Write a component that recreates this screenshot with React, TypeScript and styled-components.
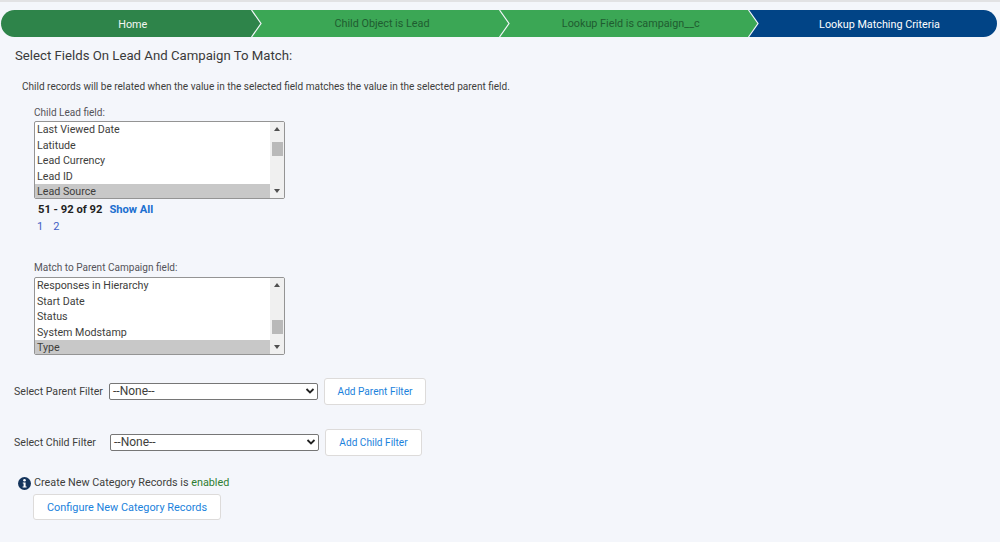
import React from "react";
import styled, { createGlobalStyle } from "styled-components";

const GlobalStyle = createGlobalStyle`
    html, body {
        margin: 0;
        padding: 0;
        height: 542px;
        overflow: hidden;
        background-color: #f4f6fb;
        font-family: Roboto, "Open Sans", Arial, sans-serif;
        color: #3e3e3c;
    }
`;

const Page = styled.div`
    border-top: 2px solid #e2e2e4;
    padding: 8px 3px 0 1px;
`;

const PathBar = styled.div`
    display: grid;
    grid-template-columns: 250.5px 248px 249.5px 1fr;
    height: 27px;
`;

const PathStep = styled.div<{ $bg: string; $fg: string; $first?: boolean; $last?: boolean }>`
    position: relative;
    display: flex;
    align-items: center;
    justify-content: center;
    padding-left: 13px;
    padding-top: ${(p) => (p.$first || p.$last ? "2px" : "0")};
    background-color: ${(p) => p.$bg};
    color: ${(p) => p.$fg};
    font-size: 10.8px;
    border-radius: ${(p) => (p.$first ? "14px 0 0 14px" : p.$last ? "0 14px 14px 0" : "0")};
`;

const Chevron = styled.svg`
    position: absolute;
    top: 0;
    right: -11px;
    width: 12px;
    height: 27px;
    z-index: 1;
`;

const Title = styled.h2`
    margin: 10px 0 0 14px;
    font-size: 13.2px;
    line-height: 18px;
    font-weight: 400;
    color: #3a3a3a;
`;

const Help = styled.p`
    margin: 15px 0 0 21px;
    font-size: 10.05px;
    line-height: 14px;
    color: #3e3e3c;
`;

const FieldBlock = styled.div`
    margin: 12px 0 0 33px;
    width: 251px;
`;

const FieldLabel = styled.div`
    font-size: 10.05px;
    line-height: 14px;
    color: #54545a;
    margin-bottom: 1px;
`;

const ParentLabel = styled(FieldLabel)`
    margin-bottom: 2px;
`;

const ListBox = styled.div`
    box-sizing: border-box;
    display: flex;
    height: 78px;
    background-color: #fff;
    border: 1px solid #949494;
    border-radius: 2px;
    overflow: hidden;
`;

const Options = styled.div`
    flex: 1;
    display: flex;
    flex-direction: column;
`;

const Option = styled.div<{ $selected?: boolean }>`
    height: 15.5px;
    line-height: 15.5px;
    padding-left: 2px;
    font-size: 10.7px;
    color: #3e3e3c;
    background-color: ${(p) => (p.$selected ? "#c8c8c8" : "transparent")};
`;

const ScrollTrack = styled.div`
    position: relative;
    width: 14px;
    background-color: #f0f0f0;
`;

const ScrollThumb = styled.div<{ $top: number }>`
    position: absolute;
    left: 2px;
    top: ${(p) => p.$top}px;
    width: 11px;
    height: 14px;
    background-color: #b9b9b9;
`;

const ScrollArrow = styled.div<{ $down?: boolean }>`
    position: absolute;
    left: 4px;
    ${(p) => (p.$down ? "bottom: 5px;" : "top: 5px;")}
    width: 0;
    height: 0;
    border-left: 3px solid transparent;
    border-right: 3px solid transparent;
    ${(p) => (p.$down ? "border-top: 4px solid #505050;" : "border-bottom: 4px solid #505050;")}
`;

const Pager = styled.div`
    margin: 3px 0 0 4px;
    font-size: 11.2px;
    line-height: 15px;
    font-weight: 700;
    color: #222;
`;

const ShowAll = styled.a`
    margin-left: 7px;
    color: #1b6fd0;
`;

const Pages = styled.div`
    display: flex;
    gap: 10px;
    margin: 2px 0 0 3px;
    font-size: 11px;
    line-height: 15px;
    color: #3f5fc4;
`;

const ParentBlock = styled(FieldBlock)`
    margin-top: 27px;
`;

const FilterRow = styled.div<{ $top: number }>`
    display: flex;
    align-items: center;
    margin: ${(p) => p.$top}px 0 0 13px;
    gap: 6px;
`;

const FilterLabel = styled.label<{ $width: number }>`
    width: ${(p) => p.$width}px;
    font-size: 10.6px;
    white-space: nowrap;
    color: #3e3e3c;
`;

const FilterSelect = styled.div`
    box-sizing: border-box;
    display: flex;
    align-items: center;
    justify-content: space-between;
    width: 209px;
    height: 17px;
    margin-bottom: 1px;
    padding: 0 2px 0 3px;
    background-color: #fff;
    border: 1px solid #767676;
    border-radius: 2px;
    font-size: 12px;
    color: #3e3e3c;
`;

const Button = styled.button<{ $height: number; $width: number }>`
    box-sizing: border-box;
    width: ${(p) => p.$width}px;
    height: ${(p) => p.$height}px;
    padding: 0;
    background-color: #fff;
    border: 1px solid #dddbda;
    border-radius: 3px;
    font-family: inherit;
    font-size: 10.1px;
    color: #1b82dc;
`;

const InfoRow = styled.div`
    display: flex;
    align-items: center;
    gap: 3px;
    margin: 19px 0 0 17px;
    font-size: 10.8px;
    line-height: 16px;
`;

const Enabled = styled.span`
    color: #2e7d32;
`;

const ConfigureButton = styled(Button)`
    display: block;
    margin: 3px 0 0 32px;
    font-size: 10.9px;
`;

const arrow = (
    <svg width="10" height="10" viewBox="0 0 10 10">
        <path d="M1.5 3 L5 6.5 L8.5 3" fill="none" stroke="#222" strokeWidth="1.8" />
    </svg>
);

function Step(props: { label: string; bg: string; fg: string; first?: boolean; last?: boolean }) {
    return (
        <PathStep $bg={props.bg} $fg={props.fg} $first={props.first} $last={props.last}>
            {props.label}
            {!props.last && (
                <Chevron viewBox="0 0 12 27">
                    <path d="M0 0 L10 13.5 L0 27 Z" fill={props.bg} />
                    <path d="M0.5 0 L10 13.5 L0.5 27" fill="none" stroke="#f4f6fb" strokeWidth="1.2" />
                </Chevron>
            )}
        </PathStep>
    );
}

function FieldList(props: { items: string[]; thumb: number }) {
    return (
        <ListBox>
            <Options>
                {props.items.map((item, i) => (
                    <Option key={item} $selected={i === props.items.length - 1}>{item}</Option>
                ))}
            </Options>
            <ScrollTrack>
                <ScrollArrow />
                <ScrollThumb $top={props.thumb} />
                <ScrollArrow $down />
            </ScrollTrack>
        </ListBox>
    );
}

function App() {
    return (
        <Page>
            <GlobalStyle />
            <PathBar>
                <Step label="Home" bg="#2e844a" fg="#f2f6f2" first />
                <Step label="Child Object is Lead" bg="#3ba755" fg="#1f5c30" />
                <Step label="Lookup Field is campaign__c" bg="#3ba755" fg="#1f5c30" />
                <Step label="Lookup Matching Criteria" bg="#014486" fg="#fff" last />
            </PathBar>
            <Title>Select Fields On Lead And Campaign To Match:</Title>
            <Help>Child records will be related when the value in the selected field matches the value in the selected parent field.</Help>
            <FieldBlock>
                <FieldLabel>Child Lead field:</FieldLabel>
                <FieldList items={["Last Viewed Date", "Latitude", "Lead Currency", "Lead ID", "Lead Source"]} thumb={20} />
                <Pager>
                    51 - 92 of 92<ShowAll>Show All</ShowAll>
                </Pager>
                <Pages>
                    <span>1</span>
                    <span>2</span>
                </Pages>
            </FieldBlock>
            <ParentBlock>
                <ParentLabel>Match to Parent Campaign field:</ParentLabel>
                <FieldList items={["Responses in Hierarchy", "Start Date", "Status", "System Modstamp", "Type"]} thumb={42} />
            </ParentBlock>
            <FilterRow $top={23}>
                <FilterLabel $width={89}>Select Parent Filter</FilterLabel>
                <FilterSelect>--None--{arrow}</FilterSelect>
                <Button $height={27} $width={102}>Add Parent Filter</Button>
            </FilterRow>
            <FilterRow $top={24}>
                <FilterLabel $width={90}>Select Child Filter</FilterLabel>
                <FilterSelect>--None--{arrow}</FilterSelect>
                <Button $height={27} $width={97}>Add Child Filter</Button>
            </FilterRow>
            <InfoRow>
                <svg width="13" height="13" viewBox="0 0 13 13">
                    <circle cx="6.5" cy="6.5" r="6.5" fill="#14345c" />
                    <circle cx="6.5" cy="3.3" r="1.3" fill="#fff" />
                    <path d="M4.8 5.4 H7.6 V9.4 H8.6 V10.6 H4.6 V9.4 H5.6 V6.6 H4.8 Z" fill="#fff" />
                </svg>
                <span>Create New Category Records is <Enabled>enabled</Enabled></span>
            </InfoRow>
            <ConfigureButton $height={26} $width={188}>Configure New Category Records</ConfigureButton>
        </Page>
    );
}

export default App;
